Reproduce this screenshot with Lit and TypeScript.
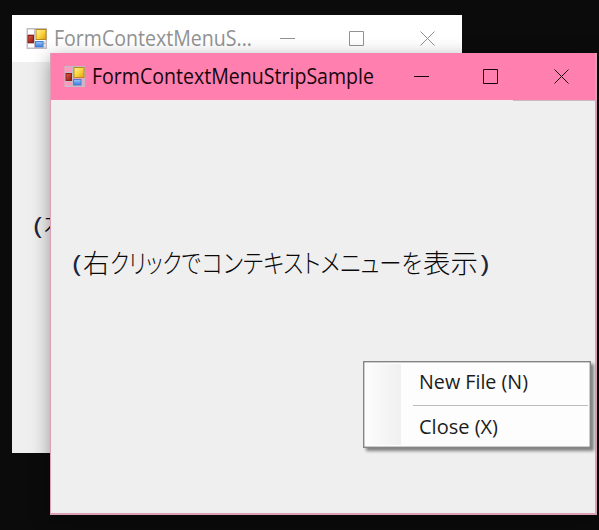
import { LitElement, html, css, svg } from "lit";
import { customElement, property } from "lit/decorators.js";

@customElement("fit-text")
class FitText extends LitElement {
  @property() text = "";
  @property({ type: Number }) width = 100;
  @property({ type: Number }) size = 20;
  static styles = css`
    :host { display: block; flex: none; }
    svg { display: block; overflow: visible; }
    text { font-family: "Open Sans", "Noto Sans", sans-serif; fill: currentColor; }
  `;
  render() {
    return html`<svg width=${this.width} height="30">
      ${svg`<text x="0" y="22" font-size=${this.size} textLength=${this.width} lengthAdjust="spacingAndGlyphs">${this.text}</text>`}
    </svg>`;
  }
}

@customElement("form-icon")
class FormIcon extends LitElement {
  static styles = css`:host { display: block; flex: none; } svg { display: block; }`;
  render() {
    return html`<svg width="21" height="21" viewBox="0 0 21 21">
      <defs>
        <linearGradient id="y" x2="1" y2="1"><stop stop-color="#fff3a0"/><stop offset=".5" stop-color="#fcd640"/><stop offset="1" stop-color="#dda010"/></linearGradient>
        <linearGradient id="r" x2="1" y2="1"><stop stop-color="#d8604c"/><stop offset="1" stop-color="#8e180c"/></linearGradient>
        <linearGradient id="b" x2="0" y2="1"><stop stop-color="#9cc8ff"/><stop offset="1" stop-color="#3a78d8"/></linearGradient>
      </defs>
      <rect x="1.25" y=".75" width="19" height="19.5" fill="#fff" fill-opacity=".2" stroke="#c4bcc4" stroke-width="1.5"/>
      <path d="M8.5 1V20M1 6.5H9M1 15.5H20M18 13V20" stroke="#c4bcc4" fill="none"/>
      <rect x="10" y="1.5" width="10" height="10" fill="url(#y)" stroke="#b88a20"/>
      <rect x="2" y="7.5" width="5.5" height="7" fill="url(#r)" stroke="#941e16"/>
      <rect x="9.5" y="13.5" width="7.5" height="5.5" fill="url(#b)" stroke="#4c80cc"/>
    </svg>`;
  }
}

@customElement("title-bar")
class TitleBar extends LitElement {
  @property() text = "";
  @property({ type: Number }) width = 100;
  static styles = css`
    :host { display: flex; height: 47px; align-items: center; box-sizing: border-box; padding-left: 14px; }
    fit-text { margin: 0 auto 0 7px; }
    svg { display: block; flex: none; margin-right: 27px; }
    path { fill: none; stroke: currentColor; stroke-width: 1; }
  `;
  render() {
    return html`<form-icon></form-icon>
      <fit-text .text=${this.text} .width=${this.width} .size=${21}></fit-text>
      <svg width="155" height="16"><path d="M0 7.5H15M69.5 .5H83.5V14.5H69.5ZM140.5 .5L154.5 14.5M154.5 .5L140.5 14.5"/></svg>`;
  }
}

interface Run { text: string; x: number; width: number; kind: string; }

const runs: Run[] = [
  { text: "(", x: 1.5, width: 9, kind: "paren" },
  { text: "右", x: 12, width: 26.5, kind: "kanji" },
  { text: "クリックで", x: 39, width: 91, kind: "kana" },
  { text: "コンテキストメニューを", x: 131, width: 220, kind: "kana" },
  { text: "表示", x: 352, width: 55, kind: "kanji" },
  { text: ")", x: 409, width: 9, kind: "paren" },
];

@customElement("hint-label")
class HintLabel extends LitElement {
  static styles = css`
    :host { display: block; }
    svg { display: block; overflow: visible; }
    text { fill: #080808; font-family: "Noto Sans CJK JP", sans-serif; font-size: 26.5px; font-weight: 300; }
    .kana { font-feature-settings: "palt"; font-size: 26px; }
    .paren { font-family: "Open Sans", sans-serif; font-size: 24px; font-weight: 400; fill: #20243a; }
  `;
  render() {
    return html`<svg width="420" height="30">
      <text>${runs.map((r) => svg`<tspan class=${r.kind} x=${r.x} y=${r.kind === "paren" ? 24 : 25} textLength=${r.width} lengthAdjust="spacingAndGlyphs">${r.text}</tspan>`)}</text>
    </svg>`;
  }
}

@customElement("context-menu")
class ContextMenu extends LitElement {
  static styles = css`
    :host { display: block; box-sizing: border-box; width: 228px; height: 87px; border: 1px solid #858585;
      background: linear-gradient(90deg, #fcfcfc, #f0f0f0) 2px 2px / 35px 81px no-repeat #fdfdfd;
      box-shadow: inset 0 0 0 .5px #999, 3px 3px 3px #808080; color: #1c1c1c; padding: 5px 2px 0 55px; }
    .rule { height: 1px; background: #bdbdbd; margin: 8px 0 6px -6px; }
  `;
  render() {
    return html`<fit-text .text=${"New File (N)"} .width=${109} .size=${20}></fit-text>
      <div class="rule"></div>
      <fit-text .text=${"Close (X)"} .width=${79} .size=${20}></fit-text>`;
  }
}

@customElement("app-root")
class AppRoot extends LitElement {
  static styles = css`
    :host { display: block; position: relative; width: 599px; height: 530px; overflow: hidden; background: #0b0b0b; }
    .window { position: absolute; box-sizing: border-box; background: #efefef; overflow: hidden; }
    .back { left: 12px; top: 15px; width: 450px; height: 438px; }
    .front { left: 50px; top: 53px; width: 547px; height: 462px; border: solid #dba0b5; border-width: 0 2px 2px 1px; }
    .shade { position: absolute; left: 50px; top: 53px; width: 547px; height: 462px; box-shadow: 0 5px 18px rgba(0,0,0,.38); }
    .back title-bar { background: #fff; color: #929292; }
    .front title-bar { background: #ff80ae; color: #16060c; margin: 0 -1px; }
    .edge { height: 1px; width: 82px; margin-left: auto; background: #cbbcc2; }
    .back hint-label { margin: 148px 0 0 20px; }
    .front hint-label { margin: 147px 0 0 20px; }
    context-menu { position: absolute; left: 363px; top: 361px; }
  `;
  render() {
    return html`
      <div class="window back">
        <title-bar .text=${"FormContextMenuS..."} .width=${198}></title-bar>
        <hint-label></hint-label>
      </div>
      <div class="shade"></div>
      <div class="window front">
        <title-bar .text=${"FormContextMenuStripSample"} .width=${282}></title-bar>
        <div class="edge"></div>
        <hint-label></hint-label>
      </div>
      <context-menu></context-menu>`;
  }
}
